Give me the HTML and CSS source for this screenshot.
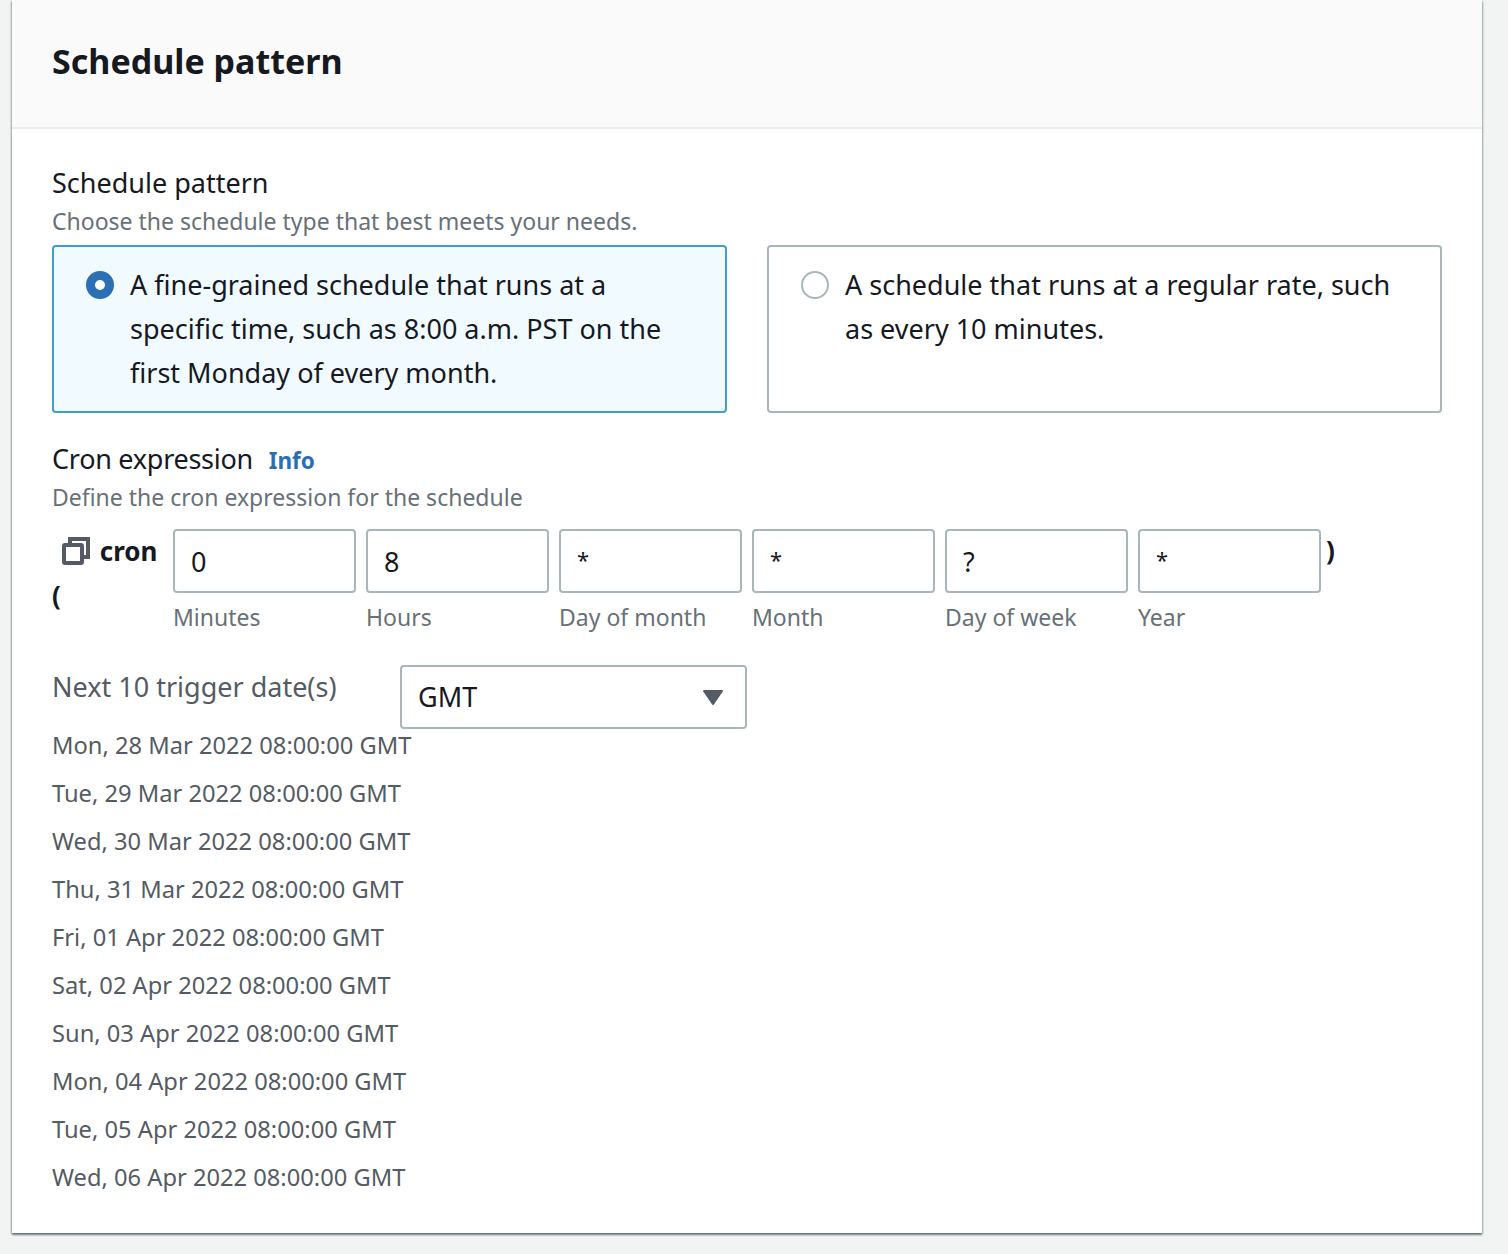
FILE: index.html
```html
<!DOCTYPE html>
<html lang="en">

<head>
    <meta charset="UTF-8">
    <meta name="viewport" content="width=device-width, initial-scale=1.0">
    <title>Schedule pattern</title>
    <link rel="stylesheet" href="styles.css">
</head>

<body>
    <div class="card">
        <div class="card-header">
            <h2>Schedule pattern</h2>
        </div>
        <div class="card-body">
            <div class="field-label pattern-label">Schedule pattern</div>
            <div class="field-desc">Choose the schedule type that best meets your needs.</div>
            <div class="tiles">
                <div class="tile selected">
                    <span class="radio"></span>
                    <span>A fine-grained schedule that runs at a specific time, such as 8:00 a.m. PST on the first Monday of every month.</span>
                </div>
                <div class="tile">
                    <span class="radio"></span>
                    <span>A schedule that runs at a regular rate, such as every 10 minutes.</span>
                </div>
            </div>

            <div class="field-label cron-label">Cron expression <a class="info" href="#">Info</a></div>
            <div class="field-desc cron-desc">Define the cron expression for the schedule</div>
            <div class="cron-row">
                <div class="cron-prefix">
                    <svg class="copy-icon" width="28" height="28" viewBox="0 0 28 28" fill="none" stroke="#545b64" stroke-width="4">
                        <rect x="2" y="8" width="18" height="18" rx="1"></rect>
                        <path d="M8 7V2h18v18h-5"></path>
                    </svg>
                    cron (
                </div>
                <div class="cron-field">
                    <div class="cron-input">0</div>
                    <div class="cron-hint">Minutes</div>
                </div>
                <div class="cron-field">
                    <div class="cron-input">8</div>
                    <div class="cron-hint">Hours</div>
                </div>
                <div class="cron-field">
                    <div class="cron-input star">*</div>
                    <div class="cron-hint">Day of month</div>
                </div>
                <div class="cron-field">
                    <div class="cron-input star">*</div>
                    <div class="cron-hint">Month</div>
                </div>
                <div class="cron-field">
                    <div class="cron-input">?</div>
                    <div class="cron-hint">Day of week</div>
                </div>
                <div class="cron-field">
                    <div class="cron-input star">*</div>
                    <div class="cron-hint">Year</div>
                </div>
                <div class="cron-close">)</div>
            </div>

            <div class="trigger-row">
                <div class="trigger-title">Next 10 trigger date(s)</div>
                <div class="select">
                    <span>GMT</span>
                    <svg width="20" height="15" viewBox="0 0 20 15"><path d="M1 1h18L10 14z" fill="#545b64" stroke="#545b64" stroke-width="2" stroke-linejoin="round"></path></svg>
                </div>
            </div>
            <ul class="dates">
                <li>Mon, 28 Mar 2022 08:00:00 GMT</li>
                <li>Tue, 29 Mar 2022 08:00:00 GMT</li>
                <li>Wed, 30 Mar 2022 08:00:00 GMT</li>
                <li>Thu, 31 Mar 2022 08:00:00 GMT</li>
                <li>Fri, 01 Apr 2022 08:00:00 GMT</li>
                <li>Sat, 02 Apr 2022 08:00:00 GMT</li>
                <li>Sun, 03 Apr 2022 08:00:00 GMT</li>
                <li>Mon, 04 Apr 2022 08:00:00 GMT</li>
                <li>Tue, 05 Apr 2022 08:00:00 GMT</li>
                <li>Wed, 06 Apr 2022 08:00:00 GMT</li>
            </ul>
        </div>
    </div>
</body>

</html>
```

FILE: styles.css
```css
* {
    box-sizing: border-box;
}

body {
    font-family: "Noto Sans", Arial, sans-serif;
    margin: 0;
    padding: 0 26px 21px 12px;
    background-color: #f2f3f3;
    color: #16191f;
    font-size: 27px;
    line-height: 44px;
}

.card {
    background-color: #fff;
    box-shadow: 0 2px 2px rgba(0, 28, 36, 0.45), 1px 1px 2px rgba(0, 28, 36, 0.2), -1px 1px 2px rgba(0, 28, 36, 0.2);
}

.card-header {
    height: 129px;
    padding: 40px 40px 0;
    background-color: #fafafa;
    border-bottom: 2px solid #eaeded;
}

h2 {
    margin: 0;
    font-size: 34px;
    line-height: 42px;
    font-weight: 700;
}

.card-body {
    padding: 31px 40px 32px;
}

.field-label {
    height: 44px;
}

.pattern-label {
    line-height: 46px;
}

.field-desc {
    height: 34px;
    font-size: 23px;
    line-height: 34px;
    color: #687078;
}

.cron-desc {
    line-height: 32px;
}

.tiles {
    display: grid;
    grid-template-columns: 675px 675px;
    gap: 40px;
    margin-top: 7px;
}

.tile {
    display: flex;
    height: 168px;
    padding: 16px 32px 0;
    border: 2px solid #aab7b8;
    border-radius: 4px;
}

.tile.selected {
    background-color: #f1faff;
    border-color: #3f9fc6;
}

.radio {
    flex: none;
    width: 28px;
    height: 28px;
    margin: 8px 16px 0 0;
    border: 2px solid #aab7b8;
    border-radius: 50%;
    background-color: #fff;
}

.selected .radio {
    border: 9px solid #2b6fb5;
}

.cron-label {
    margin-top: 24px;
    letter-spacing: -0.27px;
}

.info {
    margin-left: 9px;
    font-size: 22.5px;
    font-weight: 700;
    letter-spacing: 0;
    color: #2a6fb5;
    text-decoration: none;
}

.cron-row {
    display: flex;
    align-items: flex-start;
    margin-top: 14px;
}

.cron-prefix {
    flex: none;
    width: 121px;
    padding-right: 10px;
    font-weight: 700;
    font-size: 26px;
}

.copy-icon {
    margin: 0 3px 0 10px;
    vertical-align: -4px;
}

.cron-field {
    flex: none;
    width: 183px;
    margin-right: 10px;
}

.cron-input {
    height: 64px;
    padding: 0 16px;
    border: 2px solid #aab7b8;
    border-radius: 4px;
    line-height: 62px;
}

.cron-input.star {
    font-size: 22px;
    line-height: 56px;
}

.cron-hint {
    margin-top: 2px;
    font-size: 23px;
    line-height: 44px;
    color: #687078;
}

.cron-close {
    margin-left: -5px;
    font-weight: 700;
    font-size: 26px;
    line-height: 42px;
}

.trigger-row {
    display: flex;
    margin-top: 26px;
}

.trigger-title {
    flex: none;
    width: 348px;
    line-height: 44px;
    color: #545b64;
}

.select {
    display: flex;
    align-items: center;
    justify-content: space-between;
    width: 347px;
    height: 64px;
    padding: 0 22px 0 16px;
    border: 2px solid #aab7b8;
    border-radius: 4px;
}

.dates {
    list-style: none;
    margin: -8px 0 0;
    padding: 0;
    font-size: 23.7px;
    color: #545b64;
}

.dates li {
    height: 48px;
    line-height: 48px;
}
```
